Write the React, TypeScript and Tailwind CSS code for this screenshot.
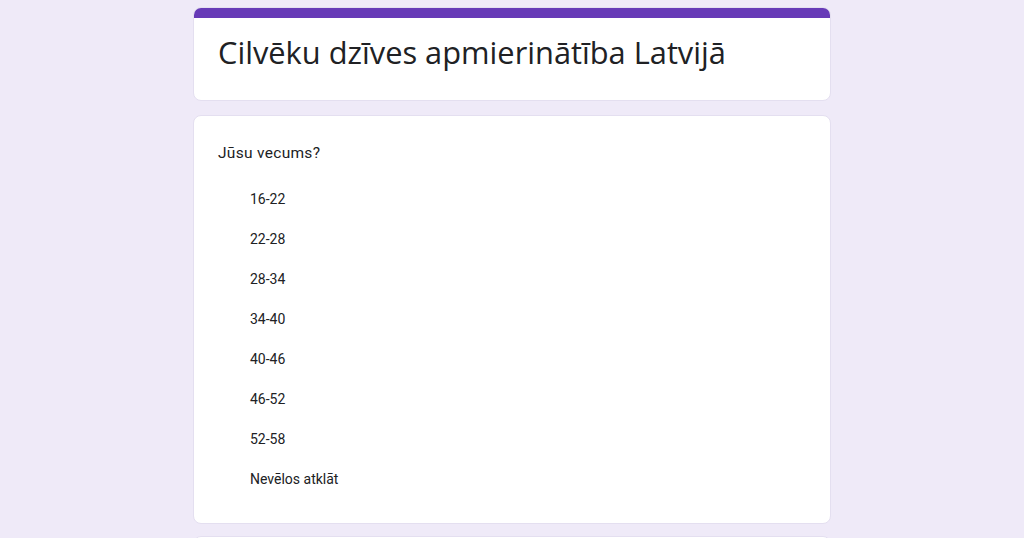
export default function App() {
  const options = ['16-22', '22-28', '28-34', '34-40', '40-46', '46-52', '52-58', 'Nevēlos atklāt']

  return (
    <main className="h-[538px] overflow-hidden bg-[#efeaf8] pt-[7px]">
      <div className="mx-auto flex w-[638px] flex-col">
        <div className="h-[94px] overflow-hidden rounded-lg border border-[#e4dff0] bg-white">
          <div className="h-[10px] bg-[#673ab7]" />
          <h1
            className="px-6 pt-[14px] text-[30.8px] leading-[40px] text-[#202124]"
            style={{ fontFamily: '"Open Sans", sans-serif' }}
          >
            Cilvēku dzīves apmierinātība Latvijā
          </h1>
        </div>

        <div
          className="mt-[14px] rounded-lg border border-[#e4dff0] bg-white px-6 pb-6 pt-[27px]"
          style={{ fontFamily: 'Roboto, sans-serif' }}
        >
          <p className="text-[15.5px] leading-5 tracking-[0.3px] text-[#202124]">Jūsu vecums?</p>
          <ul className="mt-4 flex flex-col">
            {options.map((o) => (
              <li key={o} className="flex h-10 items-center pl-8 text-[14px] text-[#202124]">
                {o}
              </li>
            ))}
          </ul>
        </div>

        <div className="mt-3 h-10 rounded-lg border border-[#e4dff0] bg-white" />
      </div>
    </main>
  )
}
